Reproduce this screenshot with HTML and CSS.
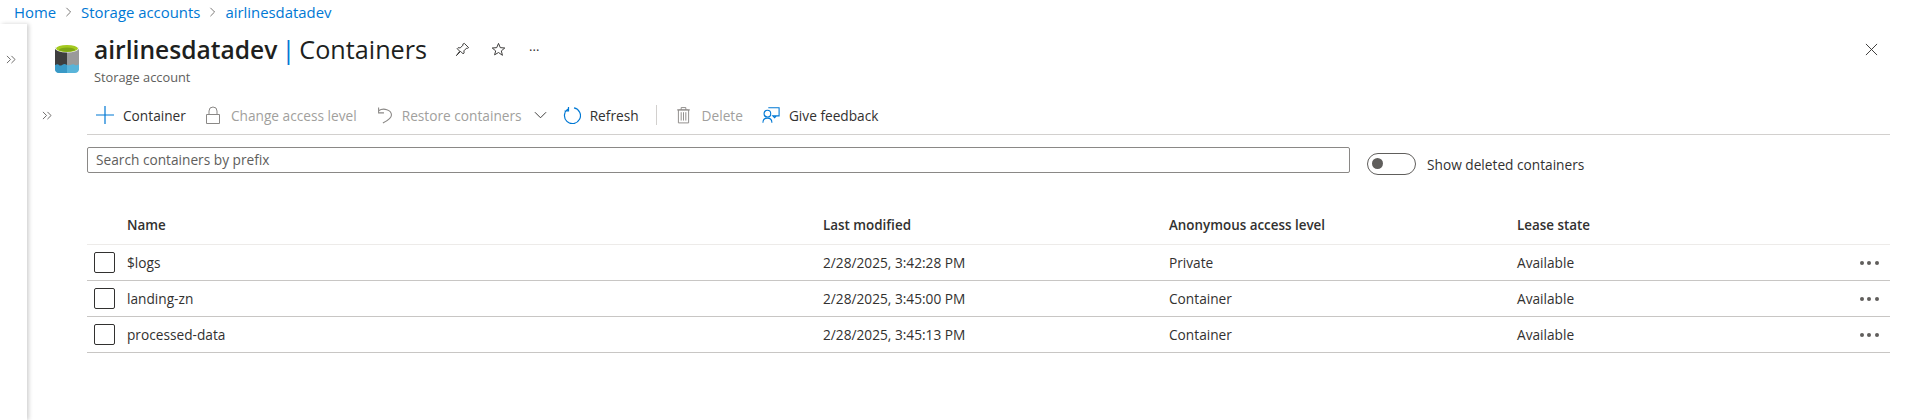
FILE: index.html
```html
<!DOCTYPE html>
<html lang="en">
<head>
<meta charset="UTF-8">
<title>airlinesdatadev | Containers</title>
<link rel="stylesheet" href="styles.css">
</head>
<body>

<nav class="breadcrumb">
    <a>Home</a>
    <svg class="crumb-sep" viewBox="0 0 8 12"><path d="M1.5 1l5 5-5 5"/></svg>
    <a>Storage accounts</a>
    <svg class="crumb-sep" viewBox="0 0 8 12"><path d="M1.5 1l5 5-5 5"/></svg>
    <a>airlinesdatadev</a>
</nav>

<div class="shell">
    <aside class="rail">
        <svg class="chevrons rail-toggle" viewBox="0 0 11 10"><path d="M1 1l4 4-4 4M6 1l4 4-4 4"/></svg>
    </aside>

    <main class="blade">
        <header class="blade-head">
            <svg class="logo" viewBox="0 0 24 32" preserveAspectRatio="none">
                <path d="M0 4v23c0 2.5 2 4 4 4h16c2 0 4-1.5 4-4V4z" fill="#59b4d9"/>
                <path d="M0 4v23c0 2.5 2 4 4 4h8V4z" fill="#3999c6"/>
                <path d="M0 4h12v18.5c-2-1.500-3-1.500-4.500-.5-2 1.500-3 1-3.500.3-1-1-2.500-.8-4 .3z" fill="#3e3e3e"/>
                <path d="M12 4h12v17.5c-1.500 1-3 1.500-4.500.5-1.500-1-2.500-.3-3.500.2-1.500.6-3 .8-4 .3z" fill="#9a9a9a"/>
                <ellipse cx="12" cy="4.500" rx="12" ry="4.500" fill="#fff"/>
                <ellipse cx="12" cy="4.800" rx="11" ry="3.800" fill="#a4c91f"/>
                <ellipse cx="12" cy="6" rx="8" ry="2.200" fill="#7fa616"/>
            </svg>
            <div class="titles">
                <div class="title-row">
                    <h1><span class="res-name">airlinesdatadev</span> <span class="bar">|</span> Containers</h1>
                    <svg class="head-icon pin" viewBox="0 0 16 16"><path d="M10 1.5l4.500 4.500-1 .7-1-.3-3 3 .2 2.300-1 1-2.700-2.700L1.500 14.500 5 9.800 2.300 7.100l1-1 2.300.2 3-3-.3-1z"/></svg>
                    <svg class="head-icon star" viewBox="0 0 16 16"><path d="M8 1.5l1.900 4.500 4.800.4-3.700 3.100 1.200 4.700L8 11.200l-4.200 2.500L5 9.500 1.300 6.400 6.100 6z"/></svg>
                    <span class="head-more">···</span>
                </div>
                <div class="subtitle">Storage account</div>
            </div>
            <svg class="close" viewBox="0 0 14 14"><path d="M1 1l12 12M13 1L1 13"/></svg>
        </header>

        <div class="body-wrap">
            <svg class="chevrons menu-toggle" viewBox="0 0 11 10"><path d="M1 1l4 4-4 4M6 1l4 4-4 4"/></svg>

            <div class="content">
                <div class="toolbar">
                    <button class="cmd cmd-add">
                        <svg class="cmd-icon blue" viewBox="0 0 18 18"><path d="M9 0v18M0 9h18"/></svg>Container
                    </button>
                    <button class="cmd cmd-lock off">
                        <svg class="cmd-icon" viewBox="0 0 14 18"><path d="M.5 8.500h13v9H.5zM3 8.500V5a4 4 0 0 1 8 0v3.500"/></svg>Change access level
                    </button>
                    <button class="cmd cmd-restore off">
                        <svg class="cmd-icon" viewBox="0 0 14 16"><path d="M1.500 1v5h5M1.500 4C6 1 13.500 3 13.500 8c0 3-4 5.500-8 7.500"/></svg>Restore containers
                        <svg class="caret" viewBox="0 0 14 8"><path d="M1 1l6 6 6-6"/></svg>
                    </button>
                    <button class="cmd cmd-refresh">
                        <svg class="cmd-icon blue" viewBox="0 0 18 18"><path d="M5.500 2.700A8 8 0 1 0 11 1.800M5.500 1v4h-4"/></svg>Refresh
                    </button>
                    <span class="cmd-sep"></span>
                    <button class="cmd cmd-delete off">
                        <svg class="cmd-icon" viewBox="0 0 14 18"><path d="M1.500 3.500h11v14h-11zM0 3.500h14M4.500 3.500V1h5v2.500M4.500 6v9M7 6v9M9.500 6v9"/></svg>Delete
                    </button>
                    <button class="cmd cmd-feedback">
                        <svg class="cmd-icon blue" viewBox="0 0 20 18"><path d="M7 1h12v9h-3M12 10l2 2 2-2h-4zM1 17.500c0-3 2-5 5-5s5 2 5 5"/><circle cx="6" cy="7.500" r="3.700"/></svg>Give feedback
                    </button>
                </div>

                <div class="filter-row">
                    <div class="search">Search containers by prefix</div>
                    <span class="toggle"><span class="knob"></span></span>
                    <span class="toggle-label">Show deleted containers</span>
                </div>

                <div class="grid-head">
                    <span></span>
                    <span>Name</span>
                    <span>Last modified</span>
                    <span>Anonymous access level</span>
                    <span>Lease state</span>
                    <span></span>
                </div>
                <div class="grid-row">
                    <span class="check"></span>
                    <span>$logs</span>
                    <span>2/28/2025, 3:42:28 PM</span>
                    <span>Private</span>
                    <span>Available</span>
                    <span class="dots"><i></i><i></i><i></i></span>
                </div>
                <div class="grid-row">
                    <span class="check"></span>
                    <span>landing-zn</span>
                    <span>2/28/2025, 3:45:00 PM</span>
                    <span>Container</span>
                    <span>Available</span>
                    <span class="dots"><i></i><i></i><i></i></span>
                </div>
                <div class="grid-row">
                    <span class="check"></span>
                    <span>processed-data</span>
                    <span>2/28/2025, 3:45:13 PM</span>
                    <span>Container</span>
                    <span>Available</span>
                    <span class="dots"><i></i><i></i><i></i></span>
                </div>
            </div>
        </div>
    </main>
</div>

</body>
</html>
```

FILE: styles.css
```css
* {
    box-sizing: border-box;
}

body {
    font-family: "Open Sans", "Noto Sans", sans-serif;
    font-size: 13.7px;
    color: #323130;
    background-color: #fff;
    margin: 0;
    height: 420px;
    overflow: hidden;
}

svg {
    fill: none;
    stroke: currentColor;
    flex: none;
}

/* breadcrumb */
.breadcrumb {
    display: flex;
    align-items: center;
    height: 24px;
    padding: 0 0 1px 14px;
    color: #0078d4;
    font-size: 14.9px;
}

.crumb-sep {
    width: 7px;
    height: 10px;
    margin: 0 9px;
    color: #605e5c;
}

/* page shell */
.shell {
    display: flex;
    height: 396px;
}

.rail {
    width: 27px;
    flex: none;
    box-shadow: 2px 0 4px rgba(0, 0, 0, 0.18);
    padding: 31px 0 0 6px;
}

.chevrons {
    width: 10px;
    height: 9px;
    color: #605e5c;
    display: block;
}

.blade {
    flex: 1;
    min-width: 0;
    padding-right: 21px;
}

.blade-head {
    display: flex;
    height: 63px;
    padding: 17px 0 0 28px;
}

.logo {
    width: 24px;
    height: 30px;
    stroke: none;
    margin: 3px 15px 0 0;
}

h1 {
    font-size: 25.2px;
    font-weight: 400;
    line-height: 30px;
    word-spacing: -2.5px;
    margin: 0;
    color: #201f1e;
}

.res-name {
    font-size: 24.6px;
    font-weight: 600;
}

.bar {
    color: #0078d4;
}

.title-row {
    display: flex;
    align-items: center;
    height: 17px;
}

.head-icon {
    width: 15px;
    height: 15px;
    color: #323130;
    margin-left: 28px;
}

.star {
    margin-left: 21px;
}

.head-more {
    margin-left: 23px;
    font-size: 13px;
    color: #323130;
}

.subtitle {
    margin-top: 10px;
    font-size: 12.8px;
    color: #605e5c;
}

.close {
    width: 13px;
    height: 13px;
    margin: 2px 12px 0 auto;
    color: #323130;
}

.body-wrap {
    display: flex;
}

.menu-toggle {
    margin: 24px 0 0 15px;
}

.content {
    flex: 1;
    min-width: 0;
    margin-left: 35px;
}

/* command bar */
.toolbar {
    display: flex;
    align-items: center;
    height: 48px;
    border-bottom: 1px solid #d2d0ce;
    padding: 9px 0 0 9px;
}

.cmd {
    display: flex;
    align-items: center;
    background: none;
    border: none;
    padding: 0;
    font-family: inherit;
    font-size: 13.7px;
    color: #323130;
}

.cmd.off {
    color: #a19f9d;
}

.cmd-icon {
    height: 18px;
}

.off .cmd-icon {
    color: #8a8886;
}

.blue {
    color: #0078d4;
    stroke-width: 1.2;
}

.caret {
    width: 13px;
    height: 8px;
    margin-left: 12px;
    color: #323130;
}

.cmd-add .cmd-icon {
    width: 18px;
    margin-right: 9px;
}

.cmd-lock {
    margin-left: 20px;
}

.cmd-lock .cmd-icon {
    width: 14px;
    margin-right: 11px;
}

.cmd-restore {
    margin-left: 20px;
}

.cmd-restore .cmd-icon {
    width: 15px;
    margin-right: 10px;
}

.cmd-refresh {
    margin-left: 16px;
}

.cmd-refresh .cmd-icon {
    width: 18px;
    margin-right: 9px;
}

.cmd-sep {
    width: 1px;
    height: 20px;
    background-color: #d2d0ce;
    margin: 0 20px 0 17px;
}

.cmd-delete .cmd-icon {
    width: 13px;
    margin-right: 12px;
}

.cmd-feedback {
    margin-left: 19px;
}

.cmd-feedback .cmd-icon {
    width: 18px;
    margin-right: 9px;
}

/* filter row */
.filter-row {
    display: flex;
    align-items: center;
    height: 38px;
    margin-top: 12px;
}

.search {
    width: 1263px;
    height: 26px;
    border: 1px solid #8a8886;
    border-radius: 2px;
    padding-left: 8px;
    line-height: 23px;
    color: #605e5c;
    margin-bottom: 12px;
}

.toggle {
    width: 49px;
    height: 22px;
    border: 1px solid #605e5c;
    border-radius: 11px;
    margin: 0 11px 4px 17px;
    padding: 4px;
}

.knob {
    display: block;
    width: 11px;
    height: 11px;
    border-radius: 50%;
    background-color: #605e5c;
}

.toggle-label {
    margin-bottom: 4px;
}

/* container list */
.grid-head,
.grid-row {
    display: grid;
    grid-template-columns: 40px 696px 346px 348px 1fr 30px;
    align-items: center;
}

.grid-head {
    height: 40px;
    margin-top: 20px;
    border-bottom: 1px solid #edebe9;
    font-size: 13.4px;
    font-weight: 600;
}

.grid-row {
    height: 36px;
    border-bottom: 1px solid #c8c6c4;
}

.check {
    width: 21px;
    height: 21px;
    margin-left: 7px;
    border: 1px solid #323130;
    border-radius: 2px;
}

.dots {
    display: flex;
    gap: 3.3px;
}

.dots i {
    width: 4px;
    height: 4px;
    border-radius: 50%;
    background-color: #605e5c;
}
```
